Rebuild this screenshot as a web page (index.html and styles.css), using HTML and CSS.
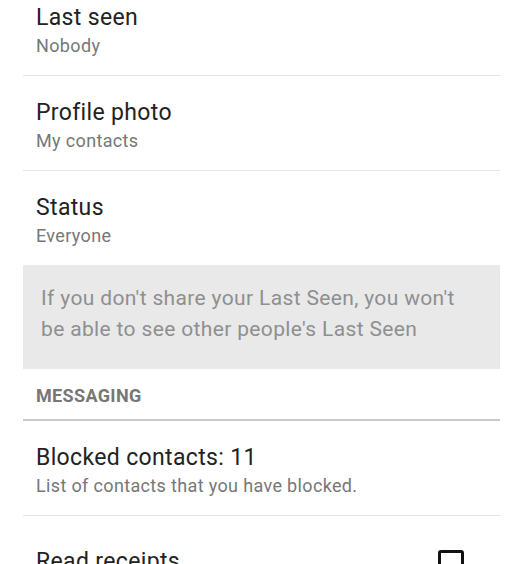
FILE: index.html
```html
<!DOCTYPE html>
<html lang="en">
<head>
  <meta charset="UTF-8" />
  <meta name="viewport" content="width=device-width, initial-scale=1.0" />
  <title>Privacy</title>
  <link rel="stylesheet" href="styles.css">
</head>
<body>
  <div class="settings">
    <div class="row">
      <div class="title">Last seen</div>
      <div class="sub">Nobody</div>
    </div>
    <div class="row">
      <div class="title">Profile photo</div>
      <div class="sub">My contacts</div>
    </div>
    <div class="row no-line">
      <div class="title">Status</div>
      <div class="sub">Everyone</div>
    </div>

    <div class="note">
      If you don't share your Last Seen, you won't be able to see other people's Last Seen
    </div>

    <div class="section">MESSAGING</div>

    <div class="row">
      <div class="title">Blocked contacts: 11</div>
      <div class="sub">List of contacts that you have blocked.</div>
    </div>
    <div class="row check-row">
      <div class="title">Read receipts</div>
      <span class="checkbox"></span>
    </div>
  </div>
</body>
</html>
```

FILE: styles.css
```css
* {
  margin: 0;
  padding: 0;
  box-sizing: border-box;
}

body {
  font-family: Roboto, 'Noto Sans', sans-serif;
  background: #fff;
  overflow: hidden;
  letter-spacing: 0.35px;
}

/* list is scrolled a bit, first row is cut at the top */
.settings {
  width: 477px;
  margin: -19px 0 0 23px;
}

.row {
  padding: 22px 0 16px 13px;
  border-bottom: 1px solid #e4e4e4;
}

.row.no-line {
  border-bottom: none;
}

.title {
  font-size: 23px;
  line-height: 29px;
  color: #222;
}

.sub {
  font-size: 18px;
  line-height: 27px;
  color: #777;
}

.note {
  background: #e9e9e9;
  padding: 18px 20px 20px 18px;
  font-size: 21px;
  line-height: 31px;
  color: #8f8f8f;
  height: 104px;
}

.section {
  padding: 16px 0 12px 13px;
  font-size: 18px;
  font-weight: bold;
  line-height: 22px;
  color: #777;
  border-bottom: 2px solid #cacaca;
}

.check-row {
  display: flex;
  align-items: flex-start;
  justify-content: space-between;
  padding-top: 31px;
}

.checkbox {
  width: 26px;
  height: 26px;
  border: 3px solid #111;
  border-radius: 3px;
  margin: 3px 36px 0 0;
}
```
